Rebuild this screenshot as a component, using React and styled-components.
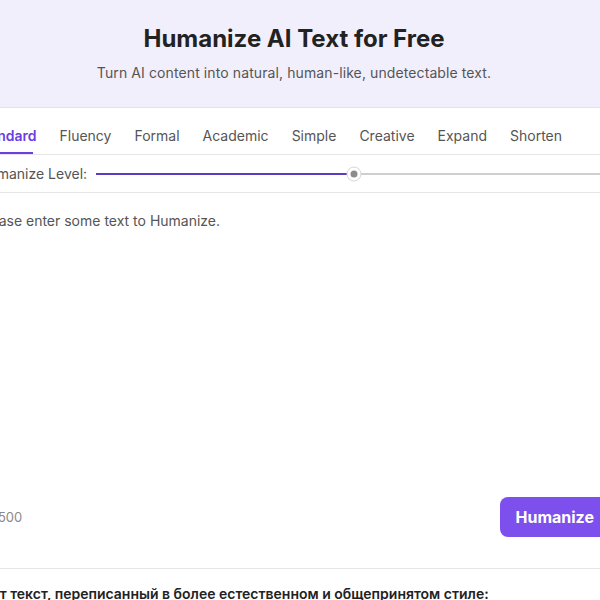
import React from "react";
import styled, { createGlobalStyle } from "styled-components";

const Global = createGlobalStyle`
  html, body { margin: 0; padding: 0; background: #ffffff; overflow: hidden; }
  body { font-family: Inter, "Noto Sans", sans-serif; color: #222; }
`;

const Page = styled.div`
  width: 632px;
  margin-left: -22px;
  display: flex;
  flex-direction: column;
`;

const Hero = styled.header`
  background: #f2effc;
  border-bottom: 1px solid #e4e2ea;
  height: 108px;
  display: flex;
  flex-direction: column;
  align-items: center;
  box-sizing: border-box;
  padding-top: 24px;
`;

const Title = styled.h1`
  margin: 0;
  font-size: 24px;
  line-height: 30px;
  font-weight: 700;
  color: #222;
`;

const Subtitle = styled.p`
  margin: 10px 0 0;
  font-size: 14px;
  line-height: 18px;
  color: #555;
  letter-spacing: 0.1px;
`;

const Tabs = styled.nav`
  display: flex;
  gap: 23px;
  height: 47px;
  margin-left: -3px;
  align-items: stretch;
  border-bottom: 1px solid #e6e6e6;
  box-sizing: border-box;
`;

const Tab = styled.div`
  position: relative;
  display: flex;
  align-items: center;
  padding-top: 8px;
  font-size: 14px;
  font-weight: ${(p) => (p.$active ? 600 : 400)};
  color: ${(p) => (p.$active ? "#6a3ee0" : "#555")};
  &::after {
    content: "";
    display: ${(p) => (p.$active ? "block" : "none")};
    position: absolute;
    left: 0;
    right: 3px;
    bottom: 0;
    height: 2px;
    background: #6a3ee0;
  }
`;

const LevelRow = styled.div`
  display: flex;
  align-items: center;
  gap: 9px;
  height: 38px;
  border-bottom: 1px solid #e6e6e6;
  box-sizing: border-box;
`;

const Label = styled.span`
  font-size: 14px;
  color: #555;
  white-space: nowrap;
`;

const Track = styled.div`
  position: relative;
  flex: 1;
  height: 2px;
  background: #cfcfcf;
  margin-top: 1px;
`;

const Fill = styled.div`
  position: absolute;
  left: 0;
  top: 0;
  bottom: 0;
  background: #5a3bc2;
`;

const Thumb = styled.div`
  position: absolute;
  top: 50%;
  width: 13px;
  height: 13px;
  border-radius: 50%;
  background: #fff;
  border: 1px solid #d6d6d6;
  transform: translate(-50%, -50%);
  display: flex;
  align-items: center;
  justify-content: center;
  &::after {
    content: "";
    width: 7px;
    height: 7px;
    border-radius: 50%;
    background: #8c8c8c;
  }
`;

const Editor = styled.div`
  display: flex;
  flex-direction: column;
  height: 376px;
  border-bottom: 1px solid #e6e6e6;
  box-sizing: border-box;
`;

const Placeholder = styled.div`
  flex: 1;
  padding-top: 19px;
  font-size: 14px;
  line-height: 18px;
  color: #555;
`;

const Footer = styled.div`
  display: flex;
  align-items: center;
  justify-content: space-between;
  padding-bottom: 31px;
`;

const Counter = styled.span`
  font-size: 13px;
  color: #8a8a8a;
  margin-left: 7px;
`;

const Button = styled.button`
  height: 40px;
  padding: 0 16px;
  border: none;
  border-radius: 8px;
  background: #7d50ee;
  color: #fff;
  font-family: Inter, "Noto Sans", sans-serif;
  font-size: 16px;
  font-weight: 700;
`;

const Result = styled.p`
  margin: 16px 0 0 4px;
  font-size: 14px;
  font-weight: 600;
  color: #222;
  white-space: nowrap;
`;

const tabs = ["Standard", "Fluency", "Formal", "Academic", "Simple", "Creative", "Expand", "Shorten"];
const level = 50.1;

export default function App() {
  return (
    <>
      <Global />
      <Page>
        <Hero>
          <Title>Humanize AI Text for Free</Title>
          <Subtitle>Turn AI content into natural, human-like, undetectable text.</Subtitle>
        </Hero>
        <Tabs>
          {tabs.map((t, i) => (
            <Tab key={t} $active={i === 0}>{t}</Tab>
          ))}
        </Tabs>
        <LevelRow>
          <Label>Humanize Level:</Label>
          <Track>
            <Fill style={{ width: `${level}%` }} />
            <Thumb style={{ left: `${level}%` }} />
          </Track>
        </LevelRow>
        <Editor>
          <Placeholder>Please enter some text to Humanize.</Placeholder>
          <Footer>
            <Counter>0/500</Counter>
            <Button>Humanize</Button>
          </Footer>
        </Editor>
        <Result>Вот текст, переписанный в более естественном и общепринятом стиле:</Result>
      </Page>
    </>
  );
}
